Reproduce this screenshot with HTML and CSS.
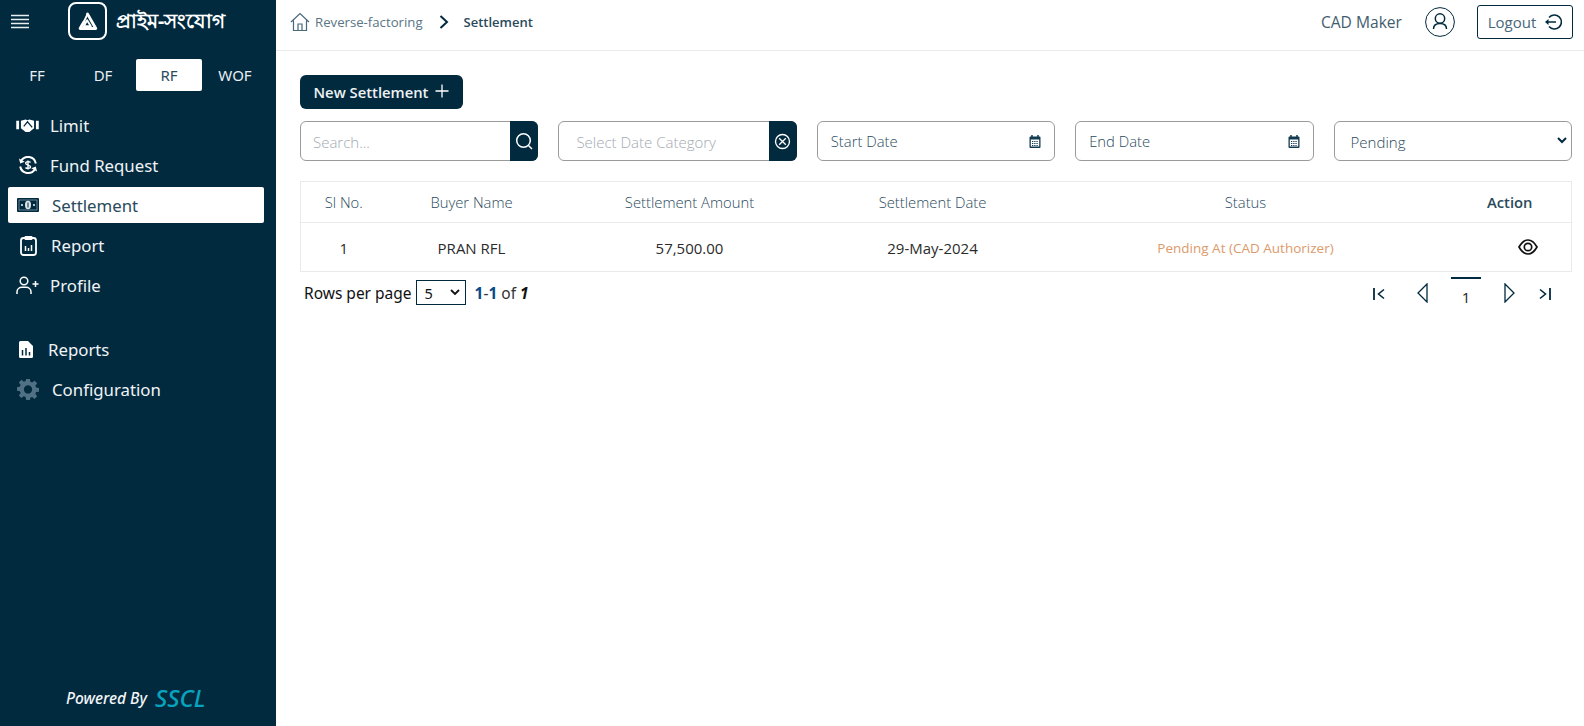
FILE: index.html
```html
<!DOCTYPE html>
<html lang="en">
<head>
<meta charset="utf-8">
<title>Settlement</title>
<link rel="stylesheet" href="styles.css">
</head>
<body>
<div class="app">
  <aside class="sidebar">
    <div class="brand">
      <svg class="burger" viewBox="0 0 18 16" width="18" height="16"><path d="M0 1.500h18M0 5.500h18M0 9.500h18M0 13.500h18" stroke="#e8edf0" stroke-width="1.300" fill="none"/></svg>
      <div class="logo-box">
        <svg viewBox="0 0 24 24" width="21" height="21"><path d="M12 3.500 21.500 20H3.500L7.800 12.500" stroke="#fff" stroke-width="3.200" stroke-linejoin="round" stroke-linecap="round" fill="none"/><path d="M7.800 12.500 12 3.500M11.500 10.500 15.800 17.500H7.800L11.500 10.500z" stroke="#fff" stroke-width="2.200" stroke-linejoin="round" fill="none"/><path d="M12.500 2.500 7 12" stroke="#012a3f" stroke-width="0" fill="none"/></svg>
      </div>
      <span class="brand-name">প্রাইম-সংযোগ</span>
    </div>
    <div class="tabs">
      <span class="tab">FF</span>
      <span class="tab">DF</span>
      <span class="tab tab-active">RF</span>
      <span class="tab">WOF</span>
    </div>
    <nav class="nav">
      <a class="nav-item">
        <svg class="nav-icon" viewBox="0 0 24 16" width="23" height="15"><path d="M0 3h3v9H0zM21 3h3v9h-3z" fill="#fff"/><path d="M5 3l5-1.500 2 1 2-1 5 1.500v8l-5 4H10L5 11z" fill="#fff"/><path d="M8 9l4-5 5 6" stroke="#012a3f" stroke-width="1.300" fill="none"/></svg>
        <span class="gap-limit">Limit</span>
      </a>
      <a class="nav-item">
        <svg class="nav-icon ic-fund" viewBox="0 0 20 20" width="20" height="20"><path d="M3 6A8 8 0 0 1 17.800 8.500M17 14A8 8 0 0 1 2.200 11.500" stroke="#fff" stroke-width="2" fill="none"/><path d="M1 3.500l1.200 5 4.500-1.800zM19 16.500l-1.200-5-4.500 1.800z" fill="#fff"/><path d="M12.500 7.500c-.5-1-4.800-1.500-4.800.8 0 2.600 4.800 1 4.800 3.500 0 2.200-4.300 1.800-5 .7M10 5.500v9" stroke="#fff" stroke-width="1.400" fill="none"/></svg>
        <span class="gap-limit">Fund Request</span>
      </a>
      <a class="nav-item nav-active">
        <svg class="nav-icon" viewBox="0 0 22 14" width="22" height="14"><rect width="22" height="14" rx="1" fill="#012a3f"/><rect x="2" y="2" width="18" height="10" fill="none" stroke="#8fa8b6" stroke-width=".7"/><ellipse cx="11" cy="7" rx="3" ry="4.200" fill="#dfe6ea"/><path d="M11 4.500v5" stroke="#012a3f" stroke-width="1"/><circle cx="5" cy="7" r="1.100" fill="#dfe6ea"/><circle cx="17" cy="7" r="1.100" fill="#dfe6ea"/></svg>
        <span class="gap-money">Settlement</span>
      </a>
      <a class="nav-item">
        <svg class="nav-icon ic-report" viewBox="0 0 17 21" width="17" height="21"><rect x="1" y="3" width="15" height="17" rx="2.500" stroke="#fff" stroke-width="1.800" fill="none"/><rect x="4.500" y="1" width="8" height="4" rx="1" fill="#fff"/><path d="M5.500 11v5M8.500 13v3M11.500 10v6" stroke="#fff" stroke-width="1.500"/></svg>
        <span class="gap-report">Report</span>
      </a>
      <a class="nav-item">
        <svg class="nav-icon" viewBox="0 0 23 19" width="23" height="19"><circle cx="8" cy="5" r="3.800" stroke="#fff" stroke-width="1.500" fill="none"/><path d="M1 18v-2c0-3 2.500-4.800 5-4.800h4c2.500 0 5 1.800 5 4.800v2" stroke="#fff" stroke-width="1.500" fill="none"/><path d="M19.500 5v6M16.500 8h6" stroke="#fff" stroke-width="1.500"/></svg>
        <span class="gap-limit">Profile</span>
      </a>
      <a class="nav-item nav-reports">
        <svg class="nav-icon" viewBox="0 0 14 17" width="14" height="17"><path d="M1.500 0H9l5 5v10.500a1.500 1.500 0 0 1-1.500 1.500h-11A1.500 1.500 0 0 1 0 15.500v-14A1.500 1.500 0 0 1 1.500 0z" fill="#fff"/><path d="M3.500 9v5.500M7 7v7.500M10.500 11v3.500" stroke="#012a3f" stroke-width="1.500"/></svg>
        <span class="gap-file">Reports</span>
      </a>
      <a class="nav-item">
        <svg class="nav-icon ic-gear" viewBox="0 0 24 24" width="22" height="22"><path fill="#4f7183" fill-rule="evenodd" d="M10 1h4l.6 3.200 1.900.8L19.200 3l2.800 2.800-2 2.700.8 1.900L24 11v4l-3.200.4-.8 1.900 2 2.700-2.800 2.800-2.700-2-1.900.8L14 24h-4l-.6-3.400-1.900-.8-2.700 2L2 19l2-2.700-.8-1.900L0 14v-4l3.200-.6.800-1.900-2-2.700L4.800 2l2.700 2 1.900-.8zM12 8a4.500 4.500 0 1 0 0 9 4.500 4.500 0 0 0 0-9z"/></svg>
        <span class="gap-gear">Configuration</span>
      </a>
    </nav>
    <div class="powered"><em>Powered By</em><strong>SSCL</strong></div>
  </aside>
  <div class="main">
    <header class="topbar">
      <div class="crumbs">
        <svg viewBox="0 0 20 20" width="20" height="20"><path d="M1 10 10 1.500 19 10M3.500 8.500V18.500h13V8.500M8 18.500v-6.500h4v6.500" stroke="#47687a" stroke-width="1.200" fill="none"/></svg>
        <span class="crumb-link">Reverse-factoring</span>
        <svg class="crumb-sep" viewBox="0 0 10 14" width="10" height="14"><path d="M1.500 1 8 7l-6.500 6" stroke="#012a3f" stroke-width="2" fill="none"/></svg>
        <span class="crumb-current">Settlement</span>
      </div>
      <div class="user">
        <span class="user-name">CAD Maker</span>
        <svg viewBox="0 0 30 30" width="30" height="30"><circle cx="15" cy="15" r="14.400" stroke="#012a3f" stroke-width="1" fill="none"/><circle cx="15" cy="11.500" r="4.700" stroke="#012a3f" stroke-width="1.500" fill="none"/><path d="M8.500 22c0-4 2.500-5.500 6.500-5.500s6.500 1.500 6.500 5.500" stroke="#012a3f" stroke-width="1.500" fill="none"/></svg>
        <button class="logout">Logout
          <svg viewBox="0 0 18 18" width="18" height="18"><path d="M5 4.500A7 7 0 1 1 5 13.500" stroke="#012a3f" stroke-width="1.500" fill="none"/><path d="M12 9H2" stroke="#012a3f" stroke-width="1.500"/><path d="M1 9l3.500-3v6z" fill="#012a3f"/></svg>
        </button>
      </div>
    </header>
    <section class="content">
      <div class="toolbar">
        <button class="new-btn">New Settlement
          <svg viewBox="0 0 14 14" width="14" height="14"><path d="M7 .5v13M.5 7h13" stroke="#fff" stroke-width="1.300"/></svg>
        </button>
      </div>
      <div class="filters">
        <div class="field">
          <span class="ph ph-search">Search...</span>
          <span class="field-btn">
            <svg viewBox="0 0 18 18" width="18" height="18"><circle cx="8.500" cy="8.500" r="6.800" stroke="#fff" stroke-width="1.500" fill="none"/><path d="M13.500 13.500l3.500 3.500" stroke="#fff" stroke-width="1.500"/></svg>
          </span>
        </div>
        <div class="field">
          <span class="ph ph-cat">Select Date Category</span>
          <span class="field-btn">
            <svg viewBox="0 0 18 18" width="17" height="17"><circle cx="9" cy="9" r="7.400" stroke="#fff" stroke-width="1.400" fill="none"/><path d="M5.500 5.500l7 7M12.500 5.500l-7 7" stroke="#fff" stroke-width="1.400"/></svg>
          </span>
        </div>
        <div class="field field-date">
          <span class="date-text">Start Date</span>
          <svg viewBox="0 0 12 13" width="12" height="13"><path d="M1.500 1.500h9a1 1 0 0 1 1 1v9.500a1 1 0 0 1-1 1h-9a1 1 0 0 1-1-1V2.500a1 1 0 0 1 1-1z" fill="#123a50"/><path d="M3 0v2M9 0v2" stroke="#123a50" stroke-width="1.500"/><rect x="1.800" y="4.500" width="8.400" height="7" fill="#fff"/><path d="M3 6.500h6M3 8.500h6M3 10.500h6" stroke="#123a50" stroke-width="1.200" stroke-dasharray="1.300 .9"/></svg>
        </div>
        <div class="field field-date">
          <span class="date-text">End Date</span>
          <svg viewBox="0 0 12 13" width="12" height="13"><path d="M1.500 1.500h9a1 1 0 0 1 1 1v9.500a1 1 0 0 1-1 1h-9a1 1 0 0 1-1-1V2.500a1 1 0 0 1 1-1z" fill="#123a50"/><path d="M3 0v2M9 0v2" stroke="#123a50" stroke-width="1.500"/><rect x="1.800" y="4.500" width="8.400" height="7" fill="#fff"/><path d="M3 6.500h6M3 8.500h6M3 10.500h6" stroke="#123a50" stroke-width="1.200" stroke-dasharray="1.300 .9"/></svg>
        </div>
        <div class="field field-select">
          <span class="select-text">Pending</span>
          <svg class="chev" viewBox="0 0 10 7" width="10" height="7"><path d="M1 1l4 4 4-4" stroke="#012a3f" stroke-width="2" fill="none"/></svg>
        </div>
      </div>
      <table class="grid">
        <colgroup>
          <col class="c-si"><col class="c-buyer"><col class="c-amount"><col class="c-date"><col class="c-status"><col class="c-action">
        </colgroup>
        <thead>
          <tr>
            <th>Sl No.</th><th>Buyer Name</th><th>Settlement Amount</th><th>Settlement Date</th><th>Status</th><th class="th-action">Action</th>
          </tr>
        </thead>
        <tbody>
          <tr>
            <td>1</td><td>PRAN RFL</td><td>57,500.00</td><td>29-May-2024</td><td class="status">Pending At (CAD Authorizer)</td>
            <td><svg viewBox="0 0 20 16" width="20" height="16"><path d="M1 8c2.500-4.500 5.500-7 9-7s6.500 2.500 9 7c-2.500 4.500-5.500 7-9 7s-6.500-2.500-9-7z" stroke="#111" stroke-width="1.700" fill="none"/><circle cx="10" cy="8" r="3.700" stroke="#111" stroke-width="1.700" fill="none"/></svg></td>
          </tr>
        </tbody>
      </table>
      <div class="pager">
        <div class="rows">
          <span class="rows-label">Rows per page</span>
          <span class="rows-select">5<svg viewBox="0 0 10 7" width="10" height="7"><path d="M1 1l4 4 4-4" stroke="#111" stroke-width="1.800" fill="none"/></svg></span>
          <span class="range"><b>1</b>-<b>1</b> of <i>1</i></span>
        </div>
        <div class="pages">
          <svg class="p-first" viewBox="0 0 12 12" width="12" height="12"><path d="M1 0v12" stroke="#012a3f" stroke-width="1.800"/><path d="M11 1.500 5.500 6l5.500 4.500" stroke="#012a3f" stroke-width="1.600" fill="none"/></svg>
          <svg class="p-prev" viewBox="0 0 11 20" width="11" height="20"><path d="M10 1 1 10l9 9z" stroke="#012a3f" stroke-width="1.300" fill="none"/></svg>
          <span class="p-current">1</span>
          <svg class="p-next" viewBox="0 0 11 20" width="11" height="20"><path d="M1 1l9 9-9 9z" stroke="#012a3f" stroke-width="1.300" fill="none"/></svg>
          <svg class="p-last" viewBox="0 0 12 12" width="12" height="12"><path d="M11 0v12" stroke="#012a3f" stroke-width="1.800"/><path d="M1 1.500 6.500 6 1 10.500" stroke="#012a3f" stroke-width="1.600" fill="none"/></svg>
        </div>
      </div>
    </section>
  </div>
</div>
</body>
</html>
```
FILE: styles.css
```css
* { box-sizing: border-box; }
html, body { margin: 0; height: 100%; }
body { font-family: "Open Sans", "Noto Sans", sans-serif; color: #012a3f; background: #fff; }
.app { display: flex; height: 726px; overflow: hidden; }

.sidebar { width: 276px; flex: none; background: #012a3f; color: #fff; display: flex; flex-direction: column; font-family: "Noto Sans", "Open Sans", sans-serif; }
.brand { height: 50px; display: flex; align-items: flex-start; padding: 2px 0 0 11px; }
.burger { flex: none; margin-top: 12px; }
.logo-box { width: 39px; height: 38px; margin-left: 39px; border: 2px solid #fff; border-radius: 8px; display: flex; align-items: center; justify-content: center; flex: none; }
.brand-name { margin: 5px 0 0 9px; font-size: 19.500px; line-height: 27px; font-weight: 700; white-space: nowrap; }

.tabs { display: grid; grid-template-columns: repeat(4, 66px); margin: 9px 0 0 4px; }
.tab { height: 32px; display: flex; align-items: center; justify-content: center; font-size: 15px; border-radius: 2px; color: #e9eef1; }
.tab-active { background: #fff; color: #2a4a5c; }

.nav { display: flex; flex-direction: column; margin-top: 16px; padding: 0 12px 0 8px; }
.nav-item { height: 36px; margin-bottom: 4px; display: flex; align-items: center; padding-left: 8px; font-size: 16.800px; color: #f1f4f6; border-radius: 2px; }
.nav-active { background: #fff; color: #2a4a5c; padding-left: 9px; }
.nav-reports { margin-top: 24px; padding-left: 11px; }
.nav-icon { flex: none; }
.gap-limit { margin-left: 11px; }
.gap-money { margin-left: 13px; }
.gap-report { margin-left: 13px; }
.ic-fund { margin-left: 2px; margin-right: 1px; }
.ic-report { margin-left: 4px; margin-right: 1px; }
.gap-file { margin-left: 15px; }
.ic-gear { margin-left: 1px; }
.gap-gear { margin-left: 13px; }

.powered { margin-top: auto; height: 40px; display: flex; align-items: flex-start; padding-left: 66px; gap: 8px; }
.powered em { font-size: 15.500px; line-height: 24px; font-style: italic; font-weight: 500; color: #f3f5f7; }
.powered strong { font-size: 24px; line-height: 24px; font-weight: 500; font-style: italic; color: #0aa3bd; }

.main { flex: 1; min-width: 0; display: flex; flex-direction: column; }
.topbar { height: 51px; flex: none; border-bottom: 1px solid #e8eaec; display: flex; align-items: center; justify-content: space-between; padding: 0 11px 7px 14px; }
.crumbs { display: flex; align-items: center; }
.crumb-link { margin-left: 5px; font-size: 13.200px; color: #5a7584; }
.crumb-sep { margin: 0 15px 0 16px; }
.crumb-current { font-size: 13px; font-weight: 600; color: #2a4a5c; }
.user { display: flex; align-items: center; }
.user-name { font-size: 15.600px; color: #3f5d6e; margin-right: 23px; }
.logout { margin-left: 22px; width: 96px; height: 34px; border: 1px solid #012a3f; border-radius: 3px; background: #fff; display: flex; align-items: center; justify-content: center; gap: 8px; font: 400 15px "Open Sans", sans-serif; color: #47687a; padding: 0; }

.content { padding: 24px 12px 0 24px; }
.toolbar { display: flex; }
.new-btn { width: 163px; height: 34px; border: 0; border-radius: 6px; background: #012a3f; color: #eef2f4; display: flex; align-items: center; justify-content: center; gap: 7px; font: 600 14.800px "Open Sans", sans-serif; padding: 0; }
.new-btn svg { margin-top: -3px; }

.filters { margin-top: 12px; display: grid; grid-template-columns: repeat(5, 1fr); column-gap: 20px; }
.field { height: 40px; border: 1px solid #9a9a9a; border-radius: 6px; display: flex; align-items: center; justify-content: space-between; background: #fff; }
.ph { font-size: 15px; font-weight: 300; color: #a2aab0; padding-top: 2px; }
.ph-search { margin-left: 12px; }
.ph-cat { margin-left: 17px; }
.field-btn { width: 28px; height: 40px; margin: -1px -1px -1px 0; background: #012a3f; border-radius: 0 6px 6px 0; display: flex; align-items: center; justify-content: center; flex: none; }
.field-date { padding: 0 13px; }
.date-text { font-size: 14.800px; font-weight: 300; color: #2a4a5c; }
.field-select { padding: 0 3px 0 16px; }
.select-text { font-size: 15px; font-weight: 300; color: #2a4a5c; padding-top: 2px; }
.chev { margin-right: 1px; margin-top: -2px; }

.grid { width: 100%; margin-top: 20px; border-collapse: collapse; table-layout: fixed; border: 1px solid #e8eaec; }
.c-si { width: 86px; } .c-buyer { width: 170px; } .c-amount { width: 266px; } .c-date { width: 220px; } .c-status { width: 406px; } .c-action { width: 123px; }
.grid th { height: 41px; font-size: 14.800px; font-weight: 300; color: #2a4a5c; text-align: center; border-bottom: 1px solid #e8eaec; padding: 0; }
.grid .th-action { font-weight: 600; font-size: 14.800px; color: #2a4a5c; }
.grid td { height: 49px; font-size: 15px; color: #2b2b2b; text-align: center; padding: 1px 0 0; }
.grid td svg { display: block; margin: -2px auto 0 auto; position: relative; left: 18px; }
.grid .status { font-size: 13.500px; color: #dc9a6b; }

.pager { display: flex; justify-content: space-between; align-items: flex-start; }
.rows { display: flex; align-items: center; margin: 8px 0 0 4px; font-size: 15.500px; font-family: "Noto Sans", sans-serif; color: #111; }
.rows-select { width: 50px; height: 25px; margin-left: 4px; border: 1px solid #012a3f; display: flex; align-items: center; justify-content: space-between; padding: 0 5px 0 8px; font-size: 14.500px; }
.range { margin-left: 9px; color: #333; }
.range b { color: #0a4a8a; font-weight: 700; }
.range i { font-weight: 700; color: #111; }
.pages { display: flex; align-items: center; height: 36px; margin: 3px 21px 0 0; }
.p-first { margin-right: 32px; margin-top: 2px; }
.p-prev { margin-right: 23px; }
.p-current { width: 30px; height: 34px; border-top: 2px solid #012a3f; text-align: center; font-size: 15px; line-height: 36px; color: #222; margin-top: 2px; }
.p-next { margin-left: 23px; margin-right: 24px; }
.p-last { margin-top: 2px; }
```
